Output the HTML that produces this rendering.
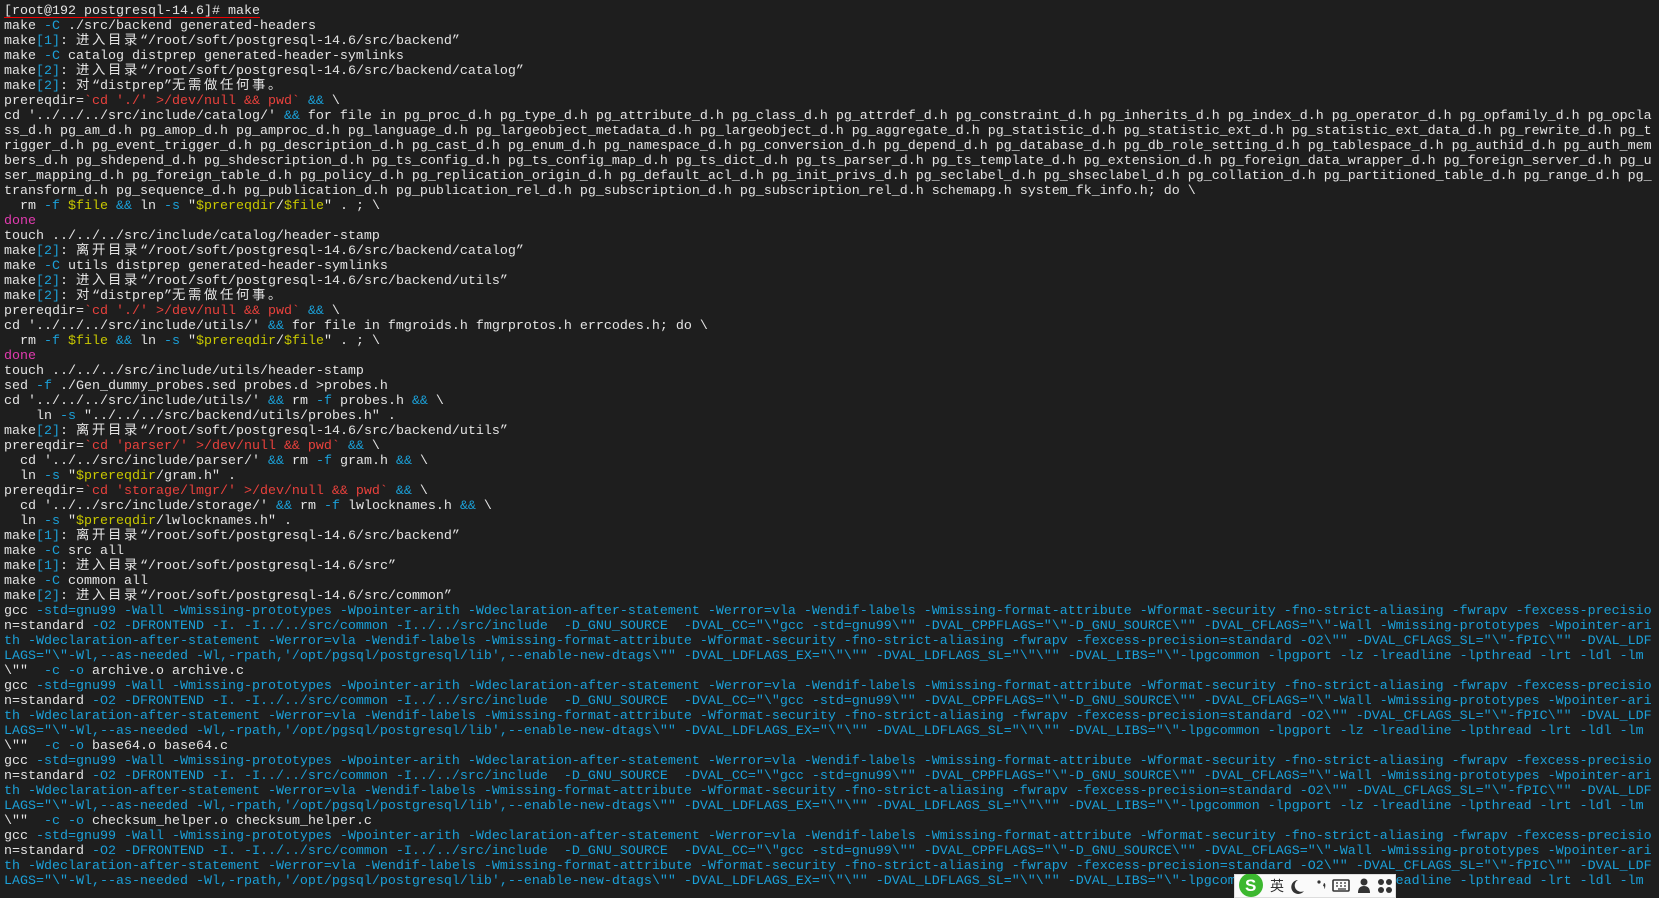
<!DOCTYPE html>
<html><head><meta charset="utf-8">
<style>
html,body{margin:0;padding:0;background:#1e1e1e;width:1659px;height:898px;overflow:hidden}
#t{position:absolute;left:4px;top:4px;font-family:"Liberation Mono","Noto Sans CJK SC",monospace;font-size:13.33px;line-height:15px;color:#e4e4e4}
#t div{height:15px;line-height:15px;white-space:pre;overflow:visible}
.c{color:#1ba0d8}.r{color:#e8413c}.y{color:#c8c800}.m{color:#e23bb0}
.z{font-family:"Noto Sans CJK SC",sans-serif;letter-spacing:2.67px;line-height:0;vertical-align:baseline}
#ime{position:absolute;left:1234px;top:874px;width:162px;height:24px;background:#fafafa;border:1px solid #ddd;box-sizing:border-box;font-family:"Noto Sans CJK SC",sans-serif}
</style></head><body>
<div id="t"><div style="text-decoration:underline;text-decoration-color:#e00;text-underline-offset:3px">[root@192 postgresql-14.6]# make</div><div>make <span class="c">-C</span> ./src/backend generated-headers</div><div>make<span class="c">[1]</span>: <span class="z">进入目录</span>“/root/soft/postgresql-14.6/src/backend”</div><div>make <span class="c">-C</span> catalog distprep generated-header-symlinks</div><div>make<span class="c">[2]</span>: <span class="z">进入目录</span>“/root/soft/postgresql-14.6/src/backend/catalog”</div><div>make<span class="c">[2]</span>: <span class="z">对</span>“distprep”<span class="z">无需做任何事。</span></div><div>prereqdir=<span class="r">`cd './' &gt;/dev/null &amp;&amp; pwd`</span> <span class="c">&amp;&amp;</span> \</div><div>cd '../../../src/include/catalog/' <span class="c">&amp;&amp;</span> for file in pg_proc_d.h pg_type_d.h pg_attribute_d.h pg_class_d.h pg_attrdef_d.h pg_constraint_d.h pg_inherits_d.h pg_index_d.h pg_operator_d.h pg_opfamily_d.h pg_opcla</div><div>ss_d.h pg_am_d.h pg_amop_d.h pg_amproc_d.h pg_language_d.h pg_largeobject_metadata_d.h pg_largeobject_d.h pg_aggregate_d.h pg_statistic_d.h pg_statistic_ext_d.h pg_statistic_ext_data_d.h pg_rewrite_d.h pg_t</div><div>rigger_d.h pg_event_trigger_d.h pg_description_d.h pg_cast_d.h pg_enum_d.h pg_namespace_d.h pg_conversion_d.h pg_depend_d.h pg_database_d.h pg_db_role_setting_d.h pg_tablespace_d.h pg_authid_d.h pg_auth_mem</div><div>bers_d.h pg_shdepend_d.h pg_shdescription_d.h pg_ts_config_d.h pg_ts_config_map_d.h pg_ts_dict_d.h pg_ts_parser_d.h pg_ts_template_d.h pg_extension_d.h pg_foreign_data_wrapper_d.h pg_foreign_server_d.h pg_u</div><div>ser_mapping_d.h pg_foreign_table_d.h pg_policy_d.h pg_replication_origin_d.h pg_default_acl_d.h pg_init_privs_d.h pg_seclabel_d.h pg_shseclabel_d.h pg_collation_d.h pg_partitioned_table_d.h pg_range_d.h pg_</div><div>transform_d.h pg_sequence_d.h pg_publication_d.h pg_publication_rel_d.h pg_subscription_d.h pg_subscription_rel_d.h schemapg.h system_fk_info.h; do \</div><div>  rm <span class="c">-f</span> <span class="y">$file</span> <span class="c">&amp;&amp;</span> ln <span class="c">-s</span> "<span class="y">$prereqdir</span>/<span class="y">$file</span>" . ; \</div><div class="m">done</div><div>touch ../../../src/include/catalog/header-stamp</div><div>make<span class="c">[2]</span>: <span class="z">离开目录</span>“/root/soft/postgresql-14.6/src/backend/catalog”</div><div>make <span class="c">-C</span> utils distprep generated-header-symlinks</div><div>make<span class="c">[2]</span>: <span class="z">进入目录</span>“/root/soft/postgresql-14.6/src/backend/utils”</div><div>make<span class="c">[2]</span>: <span class="z">对</span>“distprep”<span class="z">无需做任何事。</span></div><div>prereqdir=<span class="r">`cd './' &gt;/dev/null &amp;&amp; pwd`</span> <span class="c">&amp;&amp;</span> \</div><div>cd '../../../src/include/utils/' <span class="c">&amp;&amp;</span> for file in fmgroids.h fmgrprotos.h errcodes.h; do \</div><div>  rm <span class="c">-f</span> <span class="y">$file</span> <span class="c">&amp;&amp;</span> ln <span class="c">-s</span> "<span class="y">$prereqdir</span>/<span class="y">$file</span>" . ; \</div><div class="m">done</div><div>touch ../../../src/include/utils/header-stamp</div><div>sed <span class="c">-f</span> ./Gen_dummy_probes.sed probes.d &gt;probes.h</div><div>cd '../../../src/include/utils/' <span class="c">&amp;&amp;</span> rm <span class="c">-f</span> probes.h <span class="c">&amp;&amp;</span> \</div><div>    ln <span class="c">-s</span> "../../../src/backend/utils/probes.h" .</div><div>make<span class="c">[2]</span>: <span class="z">离开目录</span>“/root/soft/postgresql-14.6/src/backend/utils”</div><div>prereqdir=<span class="r">`cd 'parser/' &gt;/dev/null &amp;&amp; pwd`</span> <span class="c">&amp;&amp;</span> \</div><div>  cd '../../src/include/parser/' <span class="c">&amp;&amp;</span> rm <span class="c">-f</span> gram.h <span class="c">&amp;&amp;</span> \</div><div>  ln <span class="c">-s</span> "<span class="y">$prereqdir</span>/gram.h" .</div><div>prereqdir=<span class="r">`cd 'storage/lmgr/' &gt;/dev/null &amp;&amp; pwd`</span> <span class="c">&amp;&amp;</span> \</div><div>  cd '../../src/include/storage/' <span class="c">&amp;&amp;</span> rm <span class="c">-f</span> lwlocknames.h <span class="c">&amp;&amp;</span> \</div><div>  ln <span class="c">-s</span> "<span class="y">$prereqdir</span>/lwlocknames.h" .</div><div>make<span class="c">[1]</span>: <span class="z">离开目录</span>“/root/soft/postgresql-14.6/src/backend”</div><div>make <span class="c">-C</span> src all</div><div>make<span class="c">[1]</span>: <span class="z">进入目录</span>“/root/soft/postgresql-14.6/src”</div><div>make <span class="c">-C</span> common all</div><div>make<span class="c">[2]</span>: <span class="z">进入目录</span>“/root/soft/postgresql-14.6/src/common”</div><div>gcc <span class="c">-std=gnu99 -Wall -Wmissing-prototypes -Wpointer-arith -Wdeclaration-after-statement -Werror=vla -Wendif-labels -Wmissing-format-attribute -Wformat-security -fno-strict-aliasing -fwrapv -fexcess-precisio</span></div><div>n=standard <span class="c">-O2 -DFRONTEND -I. -I../../src/common -I../../src/include  -D_GNU_SOURCE  -DVAL_CC="\"gcc -std=gnu99\"" -DVAL_CPPFLAGS="\"-D_GNU_SOURCE\"" -DVAL_CFLAGS="\"-Wall -Wmissing-prototypes -Wpointer-ari</span></div><div class="c">th -Wdeclaration-after-statement -Werror=vla -Wendif-labels -Wmissing-format-attribute -Wformat-security -fno-strict-aliasing -fwrapv -fexcess-precision=standard -O2\"" -DVAL_CFLAGS_SL="\"-fPIC\"" -DVAL_LDF</div><div class="c">LAGS="\"-Wl,--as-needed -Wl,-rpath,'/opt/pgsql/postgresql/lib',--enable-new-dtags\"" -DVAL_LDFLAGS_EX="\"\"" -DVAL_LDFLAGS_SL="\"\"" -DVAL_LIBS="\"-lpgcommon -lpgport -lz -lreadline -lpthread -lrt -ldl -lm</div><div>\""  <span class="c">-c -o</span> archive.o archive.c</div><div>gcc <span class="c">-std=gnu99 -Wall -Wmissing-prototypes -Wpointer-arith -Wdeclaration-after-statement -Werror=vla -Wendif-labels -Wmissing-format-attribute -Wformat-security -fno-strict-aliasing -fwrapv -fexcess-precisio</span></div><div>n=standard <span class="c">-O2 -DFRONTEND -I. -I../../src/common -I../../src/include  -D_GNU_SOURCE  -DVAL_CC="\"gcc -std=gnu99\"" -DVAL_CPPFLAGS="\"-D_GNU_SOURCE\"" -DVAL_CFLAGS="\"-Wall -Wmissing-prototypes -Wpointer-ari</span></div><div class="c">th -Wdeclaration-after-statement -Werror=vla -Wendif-labels -Wmissing-format-attribute -Wformat-security -fno-strict-aliasing -fwrapv -fexcess-precision=standard -O2\"" -DVAL_CFLAGS_SL="\"-fPIC\"" -DVAL_LDF</div><div class="c">LAGS="\"-Wl,--as-needed -Wl,-rpath,'/opt/pgsql/postgresql/lib',--enable-new-dtags\"" -DVAL_LDFLAGS_EX="\"\"" -DVAL_LDFLAGS_SL="\"\"" -DVAL_LIBS="\"-lpgcommon -lpgport -lz -lreadline -lpthread -lrt -ldl -lm</div><div>\""  <span class="c">-c -o</span> base64.o base64.c</div><div>gcc <span class="c">-std=gnu99 -Wall -Wmissing-prototypes -Wpointer-arith -Wdeclaration-after-statement -Werror=vla -Wendif-labels -Wmissing-format-attribute -Wformat-security -fno-strict-aliasing -fwrapv -fexcess-precisio</span></div><div>n=standard <span class="c">-O2 -DFRONTEND -I. -I../../src/common -I../../src/include  -D_GNU_SOURCE  -DVAL_CC="\"gcc -std=gnu99\"" -DVAL_CPPFLAGS="\"-D_GNU_SOURCE\"" -DVAL_CFLAGS="\"-Wall -Wmissing-prototypes -Wpointer-ari</span></div><div class="c">th -Wdeclaration-after-statement -Werror=vla -Wendif-labels -Wmissing-format-attribute -Wformat-security -fno-strict-aliasing -fwrapv -fexcess-precision=standard -O2\"" -DVAL_CFLAGS_SL="\"-fPIC\"" -DVAL_LDF</div><div class="c">LAGS="\"-Wl,--as-needed -Wl,-rpath,'/opt/pgsql/postgresql/lib',--enable-new-dtags\"" -DVAL_LDFLAGS_EX="\"\"" -DVAL_LDFLAGS_SL="\"\"" -DVAL_LIBS="\"-lpgcommon -lpgport -lz -lreadline -lpthread -lrt -ldl -lm</div><div>\""  <span class="c">-c -o</span> checksum_helper.o checksum_helper.c</div><div>gcc <span class="c">-std=gnu99 -Wall -Wmissing-prototypes -Wpointer-arith -Wdeclaration-after-statement -Werror=vla -Wendif-labels -Wmissing-format-attribute -Wformat-security -fno-strict-aliasing -fwrapv -fexcess-precisio</span></div><div>n=standard <span class="c">-O2 -DFRONTEND -I. -I../../src/common -I../../src/include  -D_GNU_SOURCE  -DVAL_CC="\"gcc -std=gnu99\"" -DVAL_CPPFLAGS="\"-D_GNU_SOURCE\"" -DVAL_CFLAGS="\"-Wall -Wmissing-prototypes -Wpointer-ari</span></div><div class="c">th -Wdeclaration-after-statement -Werror=vla -Wendif-labels -Wmissing-format-attribute -Wformat-security -fno-strict-aliasing -fwrapv -fexcess-precision=standard -O2\"" -DVAL_CFLAGS_SL="\"-fPIC\"" -DVAL_LDF</div><div class="c">LAGS="\"-Wl,--as-needed -Wl,-rpath,'/opt/pgsql/postgresql/lib',--enable-new-dtags\"" -DVAL_LDFLAGS_EX="\"\"" -DVAL_LDFLAGS_SL="\"\"" -DVAL_LIBS="\"-lpgcommon -lpgport -lz -lreadline -lpthread -lrt -ldl -lm</div></div>
<div id="ime">
<svg width="162" height="24" style="position:absolute;left:-1px;top:-1px">
<circle cx="17" cy="11" r="12" fill="#3cb82f"/>
<text x="11" y="17" font-family="Liberation Sans,sans-serif" font-weight="bold" font-size="17" fill="#fff">S</text>
<text x="36" y="17" font-family="Noto Sans CJK SC,sans-serif" font-size="14" fill="#333">英</text>
<path d="M64 6 a7 7 0 1 0 6 11 a6 6 0 0 1 -6 -11z" fill="#333"/>
<circle cx="85" cy="8" r="1.6" fill="#333"/><path d="M90 9 q2 0 1 5 l-1 1 q1 -3 -1 -3z" fill="#333"/>
<rect x="99" y="6" width="16" height="11" rx="1" fill="none" stroke="#333" stroke-width="1.6"/>
<path d="M102 9h2M106 9h2M110 9h2M102 12h2M106 12h2M110 12h2M104 15h8" stroke="#333" stroke-width="1.3"/>
<circle cx="130" cy="8" r="3.5" fill="#333"/><path d="M124 19 q0 -7 6 -7 q6 0 6 7z" fill="#333"/>
<circle cx="147" cy="8" r="3" fill="#333"/><circle cx="155" cy="8" r="3" fill="#333"/><circle cx="147" cy="16" r="3" fill="#333"/><circle cx="155" cy="16" r="3" fill="#333"/>
</svg>
</div>
</body></html>
